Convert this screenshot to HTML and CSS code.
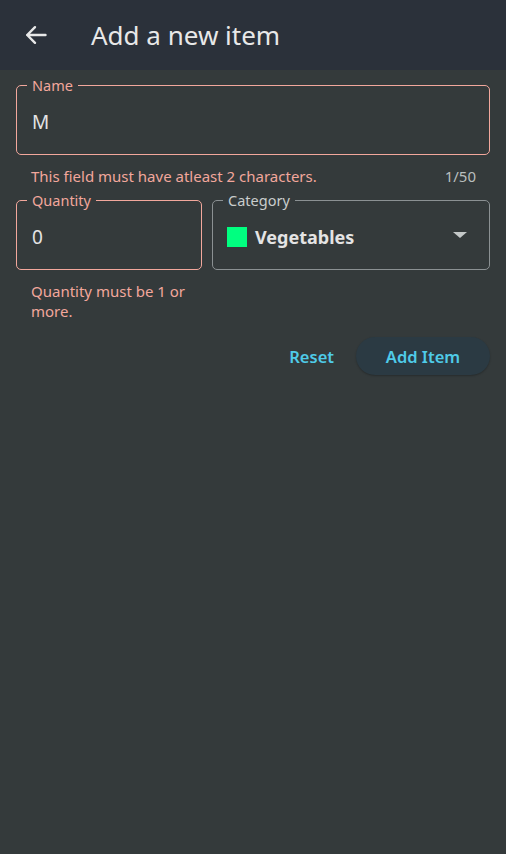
FILE: index.html
```html
<!DOCTYPE html>
<html>
<head>
<meta charset="utf-8">
<link rel="stylesheet" href="styles.css">
</head>
<body>
<header class="appbar">
  <button class="back" aria-label="Back">
    <svg width="22" height="20" viewBox="0 0 22 20"><path d="M20.5 10H2.2M10 2.2L2.2 10L10 17.8" fill="none" stroke="#e8e8e8" stroke-width="2.4" stroke-linecap="round" stroke-linejoin="round"/></svg>
  </button>
  <h1 class="title">Add a new item</h1>
</header>
<main class="form">
  <div class="field">
    <div class="box error">
      <span class="label">Name</span>
      <span class="value">M</span>
    </div>
    <div class="helper">
      <span class="err">This field must have atleast 2 characters.</span>
      <span class="count">1/50</span>
    </div>
  </div>
  <div class="row">
    <div class="field qty">
      <div class="box error">
        <span class="label">Quantity</span>
        <span class="value">0</span>
      </div>
      <div class="helper">
        <span class="err">Quantity must be 1 or more.</span>
      </div>
    </div>
    <div class="field cat">
      <div class="box neutral">
        <span class="label">Category</span>
        <span class="swatch"></span>
        <span class="value bold">Vegetables</span>
        <span class="caret"></span>
      </div>
    </div>
  </div>
  <div class="actions">
    <button class="btn text">Reset</button>
    <button class="btn filled">Add Item</button>
  </div>
</main>
</body>
</html>
```
FILE: styles.css
```css
* { box-sizing: border-box; }
html, body { margin: 0; height: 100%; }
body {
  background: #343a3b;
  font-family: "Noto Sans", "Open Sans", sans-serif;
  color: #e6e6e6;
}
.appbar {
  height: 70px;
  background: #2b313a;
  display: flex;
  align-items: center;
  padding-left: 25px;
}
.back {
  background: none;
  border: 0;
  padding: 0;
  width: 22px;
  height: 20px;
  display: flex;
  margin-right: 44px;
}
.title {
  margin: 0;
  font-weight: 400;
  font-size: 26px;
  color: #e8e8e8;
}
.form {
  padding: 15px 16px 0 16px;
}
.field { display: flex; flex-direction: column; }
.box {
  height: 70px;
  border: 1px solid;
  border-radius: 5px;
  padding: 3px 15px 0 15px;
  display: flex;
  align-items: center;
  position: relative;
}
.box .label {
  position: absolute;
  left: 10px;
  top: -11px;
  font-size: 14.5px;
  line-height: 20px;
  padding: 0 5px;
  background: #343a3b;
}
.box.error { border-color: #f2a79c; }
.box.error .label { color: #f2a79c; }
.box.neutral { border-color: #8b9193; }
.box.neutral .label { color: #c9cdcd; }
.value {
  font-size: 19px;
  color: #e4e4e4;
}
.value.bold { font-weight: 700; font-size: 18px; }
.helper {
  display: flex;
  justify-content: space-between;
  padding: 0 14px 0 15px;
  margin-top: 11px;
  font-size: 15px;
  line-height: 20px;
}
.err { color: #f2a79c; }
.count { color: #b9bfbf; }
.row {
  display: flex;
  gap: 10px;
  margin-top: 14px;
}
.qty { width: 186px; }
.cat { flex: 1; }
.swatch {
  width: 20px;
  height: 20px;
  background: #00ff80;
  margin-left: -1px;
  margin-right: 8px;
}
.caret {
  margin-left: auto;
  margin-right: 7px;
  margin-top: -4px;
  width: 0;
  height: 0;
  border-left: 7px solid transparent;
  border-right: 7px solid transparent;
  border-top: 6px solid #c4c8c8;
}
.actions {
  display: flex;
  justify-content: flex-end;
  align-items: center;
  gap: 22px;
  margin-top: 16px;
}
.btn {
  font-family: inherit;
  font-size: 16.5px;
  font-weight: 600;
  color: #4fcbe8;
  border: 0;
  cursor: pointer;
}
.btn.text { background: none; padding: 0; }
.btn.filled {
  background: #2b3a43;
  height: 38px;
  width: 134px;
  border-radius: 19px;
  box-shadow: 0 1px 2px rgba(0,0,0,0.25);
}
```
